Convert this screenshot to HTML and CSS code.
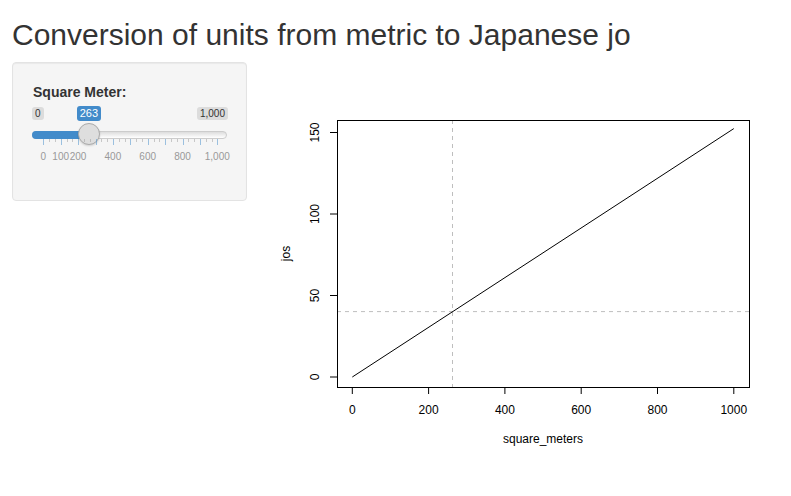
FILE: index.html
```html
<!DOCTYPE html>
<html lang="en">
<head>
    <meta charset="UTF-8">
    <title>Conversion of units</title>
    <link rel="stylesheet" href="styles.css">
</head>
<body>

<div class="page">
    <h2 class="title">Conversion of units from metric to Japanese jo</h2>

    <div class="row">
        <!-- Sidebar with the slider -->
        <div class="well">
            <div class="form-group">
                <label class="control-label">Square Meter:</label>
                <div class="irs">
                    <span class="irs-line"></span>
                    <span class="irs-bar" style="width: 56px"></span>
                    <span class="irs-min">0</span>
                    <span class="irs-max">1,000</span>
                    <span class="irs-single" style="left: 44.7px">263</span>
                    <span class="irs-slider" style="left: 45.7px"></span>
                    <div class="irs-grid" id="grid"></div>
                </div>
            </div>
        </div>

        <!-- Plot output -->
        <svg class="plot" width="501" height="400" viewBox="0 1 501 400">
            <line x1="174.5" y1="59" x2="174.5" y2="326" class="guide"/>
            <line x1="59" y1="250.6" x2="471" y2="250.6" class="guide"/>
            <line x1="74.3" y1="316" x2="455.8" y2="67.6" class="series"/>
            <rect x="59.5" y="59.5" width="412" height="267" class="box"/>

            <!-- x axis -->
            <g class="axis">
                <line x1="74.3" y1="326.5" x2="455.8" y2="326.5"/>
                <line x1="74.3" y1="326" x2="74.3" y2="333"/>
                <line x1="150.6" y1="326" x2="150.6" y2="333"/>
                <line x1="226.9" y1="326" x2="226.9" y2="333"/>
                <line x1="303.2" y1="326" x2="303.2" y2="333"/>
                <line x1="379.5" y1="326" x2="379.5" y2="333"/>
                <line x1="455.8" y1="326" x2="455.8" y2="333"/>
            </g>
            <g class="ticklabels">
                <text x="74.3" y="352.5">0</text>
                <text x="150.6" y="352.5">200</text>
                <text x="226.9" y="352.5">400</text>
                <text x="303.2" y="352.5">600</text>
                <text x="379.5" y="352.5">800</text>
                <text x="455.8" y="352.5">1000</text>
            </g>

            <!-- y axis -->
            <g class="axis">
                <line x1="59.5" y1="316" x2="59.5" y2="71.5"/>
                <line x1="52" y1="316" x2="59" y2="316"/>
                <line x1="52" y1="234.5" x2="59" y2="234.5"/>
                <line x1="52" y1="153" x2="59" y2="153"/>
                <line x1="52" y1="71.5" x2="59" y2="71.5"/>
            </g>
            <g class="ticklabels">
                <text transform="translate(41 316) rotate(-90)">0</text>
                <text transform="translate(41 234.5) rotate(-90)">50</text>
                <text transform="translate(41 153) rotate(-90)">100</text>
                <text transform="translate(41 71.5) rotate(-90)">150</text>
            </g>

            <text class="axis-title" x="265" y="382">square_meters</text>
            <text class="axis-title" transform="translate(12 192.5) rotate(-90)">jos</text>
        </svg>
    </div>
</div>

<script>
    // grid under the slider: a big tick every 100, two small ones between
    let grid = document.getElementById("grid");
    let start = 11.3;
    let step = 17.4;
    let labels = { 0: "0", 1: "100", 2: "200", 4: "400", 6: "600", 8: "800", 10: "1,000" };

    for (let i = 0; i <= 10; i++) {
        let x = start + i * step;
        let pol = document.createElement("span");
        pol.className = "irs-grid-pol";
        pol.style.left = x + "px";
        grid.appendChild(pol);

        if (i < 10) {
            for (let j = 1; j <= 2; j++) {
                let small = document.createElement("span");
                small.className = "irs-grid-pol small";
                small.style.left = (x + j * step / 3) + "px";
                grid.appendChild(small);
            }
        }

        if (labels[i] !== undefined) {
            let text = document.createElement("span");
            text.className = "irs-grid-text";
            text.style.left = x + "px";
            text.innerHTML = labels[i];
            grid.appendChild(text);
        }
    }
</script>

</body>
</html>
```

FILE: styles.css
```css
body {
    margin: 0;
    font-family: "Liberation Sans", Arial, sans-serif;
    font-size: 14px;
    color: #333;
    background-color: #fff;
}
.page {
    padding-left: 12px;
}
.title {
    font-size: 30px;
    font-weight: normal;
    line-height: 33px;
    margin: 18px 0 11px 0;
}
.row {
    display: flex;
    align-items: flex-start;
    gap: 31px;
}
.well {
    width: 235px;
    box-sizing: border-box;
    padding: 19px;
    background-color: #f5f5f5;
    border: 1px solid #e3e3e3;
    border-radius: 4px;
    box-shadow: inset 0 1px 1px rgba(0, 0, 0, 0.05);
}
.form-group {
    margin-bottom: 20px;
}
.control-label {
    display: block;
    font-weight: bold;
    line-height: 20px;
    margin-bottom: 4px;
    padding-left: 1px;
}
.irs {
    position: relative;
    height: 55px;
}
.irs-line {
    position: absolute;
    top: 25px;
    left: 0;
    right: 0;
    height: 8px;
    box-sizing: border-box;
    background: linear-gradient(to bottom, #ddd, #fff);
    border: 1px solid #ccc;
    border-radius: 8px;
}
.irs-bar {
    position: absolute;
    top: 25px;
    left: 0;
    height: 8px;
    background-color: #428bca;
    border-radius: 8px 0 0 8px;
}
.irs-min, .irs-max {
    position: absolute;
    top: 1px;
    font-size: 10px;
    line-height: 11px;
    padding: 1px 3px;
    color: #333;
    background-color: rgba(0, 0, 0, 0.1);
    border-radius: 3px;
}
.irs-min {
    left: 0;
}
.irs-max {
    right: -1px;
}
.irs-single {
    position: absolute;
    top: 0;
    font-size: 11px;
    line-height: 12.7px;
    padding: 1px 3px;
    color: #fff;
    background-color: #428bca;
    border-radius: 3px;
}
.irs-slider {
    position: absolute;
    top: 17px;
    width: 22px;
    height: 22px;
    box-sizing: border-box;
    border: 1px solid #aaa;
    background-color: #dedede;
    border-radius: 50%;
    box-shadow: 0 1px 2px rgba(0, 0, 0, 0.15);
}
.irs-grid {
    position: absolute;
    top: 33px;
    left: 0;
    right: 0;
    height: 22px;
}
.irs-grid-pol {
    position: absolute;
    top: 0;
    width: 1px;
    height: 6px;
    background-color: #428bca;
    opacity: 0.5;
}
.irs-grid-pol.small {
    height: 3px;
    background-color: #999;
}
.irs-grid-text {
    position: absolute;
    top: 12px;
    transform: translateX(-50%);
    font-size: 10px;
    line-height: 12px;
    color: #999;
    white-space: nowrap;
}
.plot {
    display: block;
    font-family: "Liberation Sans", Arial, sans-serif;
}
.plot .guide {
    stroke: #bebebe;
    stroke-width: 1;
    stroke-dasharray: 4 4;
}
.plot .series {
    stroke: #000;
    stroke-width: 1;
}
.plot .box {
    fill: none;
    stroke: #000;
    stroke-width: 1;
}
.plot .axis line {
    stroke: #000;
    stroke-width: 1;
}
.plot .ticklabels text, .plot .axis-title {
    font-size: 12px;
    fill: #000;
    text-anchor: middle;
}
```
